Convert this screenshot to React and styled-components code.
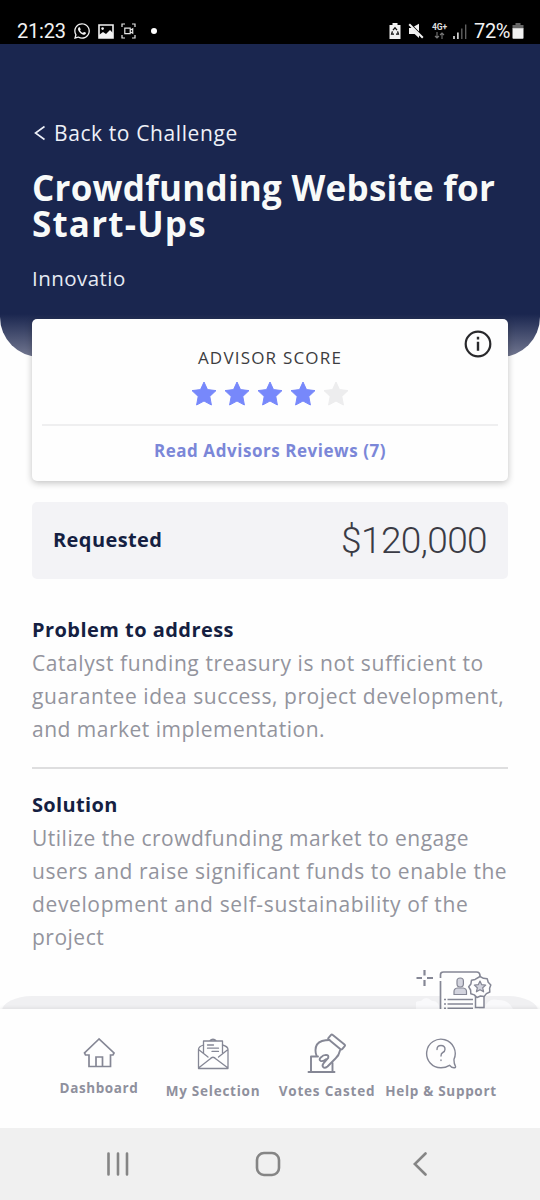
import React from "react";
import styled, { createGlobalStyle } from "styled-components";
import { FaWhatsapp } from "react-icons/fa";

const GlobalStyle = createGlobalStyle`
  * {
    box-sizing: border-box;
  }
  body {
    margin: 0;
    background: #fefefe;
    font-family: "Open Sans", "Noto Sans", sans-serif;
  }
  svg {
    display: block;
    flex-shrink: 0;
  }
`;

const Screen = styled.div`
  width: 540px;
  height: 1200px;
  display: flex;
  flex-direction: column;
  overflow: hidden;
`;

const StatusBar = styled.header`
  height: 44px;
  flex-shrink: 0;
  padding: 18px 16px 0 17px;
  display: flex;
  justify-content: space-between;
  background: #000;
  color: #f2f2f2;
  font-family: Roboto, sans-serif;
`;

const StatusGroup = styled.div`
  height: 26px;
  display: flex;
  align-items: center;
  gap: ${props => props.$gap}px;
`;

const StatusText = styled.span`
  font-size: 20px;
  line-height: 26px;
  letter-spacing: ${props => props.$spacing || 0}px;
`;

const Dot = styled.span`
  width: 6px;
  height: 6px;
  margin-left: 8px;
  border-radius: 50%;
  background: #fff;
`;

const Network = styled.div`
  display: flex;
  flex-direction: column;
  align-items: center;
  width: 17px;
  font-size: 8.5px;
  line-height: 9px;
  font-weight: 700;
  color: #ddd;
`;

const Content = styled.main`
  flex: 1;
  min-height: 0;
  overflow: hidden;
  background: #fefefe;
`;

const Hero = styled.section`
  height: 313px;
  padding: 75px 32px 0;
  border-radius: 0 0 40px 40px;
  background: linear-gradient(to bottom, #1a264f 0, #1a264f 270px, #737891 313px);
  color: #f8faf9;
`;

const BackLink = styled.a`
  height: 28px;
  display: flex;
  align-items: center;
  gap: 8px;
  padding-left: 2px;
  font-size: 21px;
  line-height: 28px;
  letter-spacing: 0.6px;
  color: #eef1f8;
`;

const Title = styled.h1`
  margin: 23px 0 0;
  font-size: 35px;
  line-height: 36px;
  font-weight: 700;
  white-space: nowrap;
`;

const Line = styled.span`
  display: block;
  white-space: nowrap;
  letter-spacing: ${props => props.$spacing || 0}px;
`;

const Author = styled.p`
  margin: 22px 0 0;
  font-size: 20.5px;
  line-height: 28px;
  letter-spacing: 0.45px;
  color: #e6eaf3;
`;

const Body = styled.div`
  padding: 0 32px;
`;

const ScoreCard = styled.section`
  position: relative;
  height: 162px;
  margin-top: -38px;
  padding: 27px 10px 0;
  display: flex;
  flex-direction: column;
  align-items: center;
  border-radius: 5px;
  background: #fefefe;
  box-shadow: 0 2px 7px rgba(0, 0, 0, 0.24);
`;

const InfoButton = styled.button`
  position: absolute;
  top: 11px;
  right: 16px;
  padding: 0;
  border: 0;
  background: none;
`;

const ScoreLabel = styled.div`
  font-size: 17px;
  line-height: 24px;
  letter-spacing: 1.2px;
  color: #3c3c40;
`;

const Stars = styled.div`
  display: flex;
  gap: 7px;
  margin-top: 11px;
`;

const ReviewsLink = styled.a`
  align-self: stretch;
  margin-top: 18px;
  padding-top: 12px;
  border-top: 2px solid #efeff0;
  text-align: center;
  font-size: 17px;
  line-height: 26px;
  font-weight: 700;
  letter-spacing: 0.55px;
  color: #7b87d8;
`;

const Requested = styled.section`
  height: 77px;
  margin-top: 21px;
  padding: 0 21px 1px;
  display: flex;
  align-items: center;
  justify-content: space-between;
  border-radius: 5px;
  background: #f3f3f6;
`;

const Heading = styled.h2`
  margin: 0;
  font-size: 20px;
  line-height: 30px;
  font-weight: 700;
  letter-spacing: ${props => props.$spacing || 0}px;
  color: #151f42;
`;

const Amount = styled.span`
  font-family: Roboto, sans-serif;
  font-size: 37px;
  font-weight: 300;
  letter-spacing: -0.6px;
  color: #3a3b45;
`;

const Section = styled.section`
  padding-top: ${props => props.$top}px;
`;

const Paragraph = styled.p`
  margin: 2px 0 0;
  font-size: 21px;
  line-height: 33px;
  font-weight: 400;
  color: #93949d;
`;

const Divider = styled.hr`
  height: 2px;
  margin: 21px 0 0;
  border: 0;
  background: #dededf;
`;

const Banner = styled.section`
  position: relative;
  height: 200px;
  margin: 42px 2px 0;
  border-radius: 30px 30px 0 0 / 15px 15px 0 0;
  background: #f0f0f2;
`;

const BannerArt = styled.svg`
  position: absolute;
  left: 414px;
  top: -28px;
`;

const TabBar = styled.nav`
  height: 119px;
  flex-shrink: 0;
  padding: 0 42px;
  display: grid;
  grid-template-columns: repeat(4, 114px);
  background: #fefefe;
  box-shadow: 0 -1px 4px rgba(0, 0, 0, 0.08);
  z-index: 1;
`;

const Tab = styled.a`
  padding-top: ${props => props.$top}px;
  display: flex;
  flex-direction: column;
  align-items: center;
  font-size: 13.5px;
  line-height: 18px;
  font-weight: 700;
  letter-spacing: ${props => props.$spacing}px;
  white-space: nowrap;
  color: #8f909d;
`;

const TabIcon = styled.svg`
  margin-bottom: ${props => props.$bottom}px;
  fill: none;
  stroke: #858795;
  stroke-width: ${props => props.$stroke || 1.5};
  stroke-linejoin: round;
  stroke-linecap: round;
`;

const SystemBar = styled.footer`
  height: 72px;
  flex-shrink: 0;
  padding: 0 113px 0 107px;
  display: grid;
  grid-template-columns: 148px 158px 14px;
  align-items: center;
  background: #f0f0f0;
  z-index: 2;
`;

function Star({ on }) {
  return (
    <svg width="26" height="25" viewBox="0 0 26 25" fill={on ? "#7788fb" : "#ededee"}>
      <path
        d="M13 1 16.5 8.6 25 9.6 18.8 15.4 20.4 24 13 20 5.6 24 7.2 15.4 1 9.6 9.5 8.6Z"
        stroke={on ? "#7788fb" : "#ededee"}
        strokeWidth="1"
        strokeLinejoin="round"
      />
    </svg>
  );
}

function StatusIcons() {
  return (
    <StatusBar>
      <StatusGroup $gap={7}>
        <StatusText $spacing={-0.2}>21:23</StatusText>
        <FaWhatsapp size={18} />
        <svg width="16" height="15" viewBox="0 0 16 15">
          <path d="M1 1h14v13H1z" fill="none" stroke="#f2f2f2" strokeWidth="1.6" />
          <path d="M1 14V11l4-3 3 2 4-4 3 3v5z" fill="#f2f2f2" />
          <circle cx="4.6" cy="4.6" r="1.3" fill="#f2f2f2" />
        </svg>
        <svg width="15" height="16" viewBox="0 0 15 16" fill="none" stroke="#e6e6e6" strokeWidth="1.2">
          <path d="M1 4V1h3M11 1h3v3M14 12v3h-3M4 15H1v-3" />
          <path d="M3.8 5.2h5.4v5.4H3.8zM9.2 7.2l2.5-1.4v4.4L9.2 8.8" />
        </svg>
        <Dot />
      </StatusGroup>
      <StatusGroup $gap={7}>
        <svg width="12" height="16" viewBox="0 0 12 16">
          <path d="M0.5 2h3V0h5v2h3v14h-11z" fill="#f2f2f2" />
          <path d="M4 7.2 6 4.8l2 2.4M8.6 8.4l.8 2.8H7M5 11.2H2.6l.8-2.8" fill="none" stroke="#111" strokeWidth="1.3" />
        </svg>
        <svg width="16" height="16" viewBox="0 0 16 16" fill="#f2f2f2">
          <path d="M1 5h3.2L11 11.8V15L6.600 11H1zM6 3.500 11 .8v7.700z" />
          <path d="M1.200 1.200 14.800 14.800" stroke="#f2f2f2" strokeWidth="2" />
        </svg>
        <Network>
          4G+
          <svg width="11" height="7" viewBox="0 0 11 7" fill="none" stroke="#777" strokeWidth="1.1">
            <path d="M3 0v6M1 4l2 2 2-2M8 7V1M6 3l2-2 2 2" />
          </svg>
        </Network>
        <svg width="14" height="15" viewBox="0 0 14 15" style={{ marginLeft: -2 }}>
          <path d="M1 12v3M4.9 8.5V15" stroke="#f2f2f2" strokeWidth="1.5" />
          <path d="M8.8 4.5V15M12.7 .5V15" stroke="#666" strokeWidth="1.3" />
        </svg>
        <StatusText $spacing={-0.4}>72%</StatusText>
        <svg width="12" height="16" viewBox="0 0 12 16" style={{ marginLeft: -5 }}>
          <path d="M.5 2h3V0h5v2h3v4H.5z" fill="#666" />
          <path d="M.5 5.3h11V15q0 .8-.8.8H1.3Q.5 15.8.5 15z" fill="#f2f2f2" />
        </svg>
      </StatusGroup>
    </StatusBar>
  );
}

function BadgeArt() {
  return (
    <BannerArt width="110" height="60" viewBox="442 968 110 60" fill="none" stroke="#858795" strokeWidth="1.7">
      <g transform="translate(26 0)">
        <path d="M412 1009q2-9 9-8 5-6 11 0 6-1 8 8zM484 1009q4-12 14-9 11 0 15 9z" fill="#f9f9fb" stroke="none" />
        <path d="M441 979v33h38v-28l-8-10h-28z" fill="#fefefe" stroke="none" />
        <path d="M440.5 978V974.500q0-2.500 3-2.500h33q3.500 0 3.500 4v2" />
        <path d="M440.5 981v31" />
        <path d="M424.500 970v5.500M424.500 980v6M416.500 978h5.500M427 978h6" strokeWidth="2.200" />
        <path d="M454 994.500v-3q0-3 3.500-3.500l5.500 0q3.500.5 3.500 3.500v3z" fill="#d3d4de" strokeWidth="1.200" />
        <path d="M457 981q0-3 3.200-3t3.200 3v3q0 3-3.200 3t-3.200-3z" fill="#d3d4de" strokeWidth="1.200" />
        <path d="M444 999.500h2M447.500 999.500h25.500M444 1004h2M447.500 1004h25.500M444 1008.200h2M447.500 1008.200h25.500" strokeWidth="1.400" />
        <path d="M475.500 995v12.500h8.500V995z" fill="#fefefe" strokeWidth="1.500" />
        <path d="m480 976.500 3.500 1.800 3.700.4 1 3.600 2.600 2.700-1.200 3.200.2 3.800-3.400 1.600-2.300 3-3.600-.6-3.500 1.500-2.700-2.600-3.500-1.200-.2-3.700-1.900-3.200 2.200-2.800.6-3.800 3.600-.8z" fill="#fefefe" strokeWidth="1.500" strokeLinejoin="round" />
        <path d="m480 981 1.700 3.700 4 .4-3 2.700.9 4-3.600-2.100-3.600 2.100.9-4-3-2.700 4-.4z" fill="#d3d4de" strokeWidth="1.200" strokeLinejoin="round" />
      </g>
    </BannerArt>
  );
}

function Tabs() {
  return (
    <TabBar>
      <Tab $top={28} $spacing={0.6}>
        <TabIcon width="32" height="32" viewBox="83 1037 32 32" $bottom={10} $stroke={1.7}>
          <path d="M99 1039 84.500 1053l1 2H89v11.500h21.500V1055h2.500l1-2zM96 1066.500v-9.500h6.500v9.500" strokeLinejoin="miter" />
        </TabIcon>
        Dashboard
      </Tab>
      <Tab $top={28} $spacing={0.75}>
        <TabIcon width="32" height="33" viewBox="197 1037 32 33" $bottom={12} $stroke={1.3}>
          <path d="M203.500 1053V1041h19v12M209.500 1041q3.500-3.500 7 0" />
          <path d="M203.500 1045q-5 1.500-5 4.500v19h29.500v-19q0-3-5.500-4.500M198.500 1049.500l9.500 7.500M228 1049.500l-9.500 7.500M198.500 1068l11.500-9q3-3.500 6 0l12 9" />
          <path d="M207.500 1045h6M207.500 1048.200h11M212 1051.400h6.500" />
        </TabIcon>
        My Selection
      </Tab>
      <Tab $top={24} $spacing={0.8}>
        <TabIcon width="40" height="41" viewBox="307 1033 40 41" $bottom={8} $stroke={1.9}>
          <path d="M308.500 1072h26M311 1072v-15.500h7M332.500 1072v-9" />
          <path d="M329.500 1040q-4 0-7.500 1-6.500 2.200-6.500 9.200 0 3 1 5.500M340 1050.500q-1 5-4.500 8l-8 8q-2.800 2.200-4.300.7-1.500-1.700.5-4l4.500-5.300q.8-3-2.200-3-3 .2-5 2.400-2.500 2.300-.5 3.500 2.500 1 5.500-1.500" />
          <path d="m332.500 1034.800 12 9.700q1 .8.2 1.700l-2.500 3q-.8.8-1.700 0l-11.800-9.700q-1-.8-.2-1.700l2.600-3q.6-.7 1.400 0z" />
        </TabIcon>
        Votes Casted
      </Tab>
      <Tab $top={28} $spacing={0.7}>
        <TabIcon width="32" height="33" viewBox="425 1037 32 33" $bottom={12} $stroke={1.4}>
          <path d="M449.500 1065.300q-4 2.500-8.500 2.500a14.300 14.300 0 1 1 13-8.500q-.2 4 1.500 7 .3 1.500-1.500 1.500-2.500 0-4.500-2.500z" />
          <path d="M437 1049.500q0-4 4-4t4 3.800q0 2.200-2.200 3.200-1.800.8-1.800 3.500M441 1060v.5" />
        </TabIcon>
        Help &amp; Support
      </Tab>
    </TabBar>
  );
}

export default function App() {
  return (
    <Screen>
      <GlobalStyle />
      <StatusIcons />
      <Content>
        <Hero>
          <BackLink>
            <svg width="12" height="16" viewBox="0 0 12 16" fill="none" stroke="#eef1f8" strokeWidth="1.6">
              <path d="M10.500 1.500 1.500 8l9 6.500" />
            </svg>
            Back to Challenge
          </BackLink>
          <Title>
            <Line $spacing={0.25}>Crowdfunding Website for</Line>
            <Line $spacing={1.2}>Start-Ups</Line>
          </Title>
          <Author>Innovatio</Author>
        </Hero>
        <Body>
          <ScoreCard>
            <InfoButton>
              <svg width="28" height="28" viewBox="0 0 28 28" fill="none" stroke="#29292c" strokeWidth="2.200">
                <circle cx="14" cy="14" r="12.300" />
                <path d="M14 11.800v9M14 6.800v2.600" strokeWidth="2.400" />
              </svg>
            </InfoButton>
            <ScoreLabel>ADVISOR SCORE</ScoreLabel>
            <Stars>
              {[1, 2, 3, 4, 5].map(n => (
                <Star key={n} on={n < 5} />
              ))}
            </Stars>
            <ReviewsLink>Read Advisors Reviews (7)</ReviewsLink>
          </ScoreCard>
          <Requested>
            <Heading $spacing={0.4}>Requested</Heading>
            <Amount>$120,000</Amount>
          </Requested>
          <Section $top={36}>
            <Heading $spacing={0.45}>Problem to address</Heading>
            <Paragraph>
              <Line $spacing={0.58}>Catalyst funding treasury is not sufficient to</Line>
              <Line $spacing={0.57}>guarantee idea success, project development,</Line>
              <Line $spacing={0.5}>and market implementation.</Line>
            </Paragraph>
          </Section>
          <Divider />
          <Section $top={21}>
            <Heading $spacing={0.35}>Solution</Heading>
            <Paragraph>
              <Line $spacing={0.5}>Utilize the crowdfunding market to engage</Line>
              <Line $spacing={0.54}>users and raise significant funds to enable the</Line>
              <Line $spacing={0.63}>development and self-sustainability of the</Line>
              <Line $spacing={0.5}>project</Line>
            </Paragraph>
          </Section>
        </Body>
        <Banner>
          <BadgeArt />
        </Banner>
      </Content>
      <Tabs />
      <SystemBar>
        <svg width="22" height="24" viewBox="0 0 22 24" stroke="#858585" strokeWidth="2.600" strokeLinecap="round">
          <path d="M1.500 1.500v21M11 1.500v21M20 1.500v21" />
        </svg>
        <svg width="26" height="26" viewBox="0 0 26 26" fill="none" stroke="#858585" strokeWidth="2.600">
          <rect x="2" y="2" width="22" height="22" rx="7" />
        </svg>
        <svg width="14" height="24" viewBox="0 0 14 24" fill="none" stroke="#858585" strokeWidth="2.600" strokeLinecap="round">
          <path d="M12.500 1.500 1.800 12l10.700 10.500" />
        </svg>
      </SystemBar>
    </Screen>
  );
}
